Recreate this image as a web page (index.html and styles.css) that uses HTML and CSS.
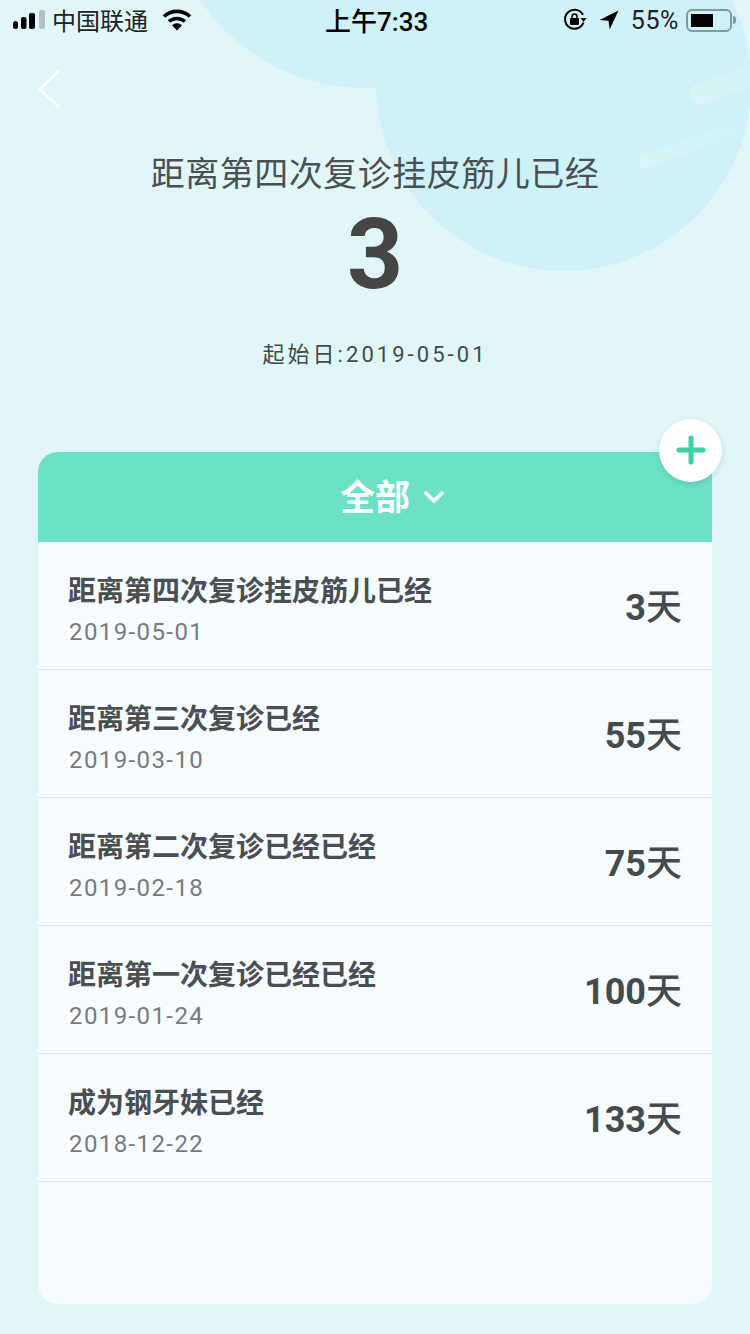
FILE: index.html
```html
<!DOCTYPE html>
<html lang="zh-CN">

<head>
    <meta charset="UTF-8">
    <meta name="viewport" content="width=device-width, initial-scale=1.0">
    <title>倒数日</title>
    <link rel="stylesheet" href="styles.css">
</head>

<body>
    <div class="page">
        <div class="circle circle-1"></div>
        <div class="circle circle-2"></div>
        <div class="streak streak-1"></div>
        <div class="streak streak-2"></div>

        <div class="status">
            <div class="status-left">
                <svg class="signal" width="34" height="20" viewBox="0 0 34 20">
                    <rect x="1" y="11" width="5" height="8" rx="2.500" fill="#000"/>
                    <rect x="9" y="7" width="5.500" height="12" rx="2" fill="#000"/>
                    <rect x="17" y="3" width="6" height="16" rx="2" fill="#000"/>
                    <rect x="27" y="0" width="6" height="19" rx="2" fill="#b2bfc3"/>
                </svg>
                <span class="carrier">中国联通</span>
                <svg class="wifi" width="30" height="22" viewBox="0 0 30 22">
                    <path d="M15 21.500l-5-5.200a7 7 0 0 1 10 0z" fill="#000"/>
                    <path d="M7 12.500a12 12 0 0 1 16 0" fill="none" stroke="#000" stroke-width="3.600"/>
                    <path d="M2 7.500a19 19 0 0 1 26 0" fill="none" stroke="#000" stroke-width="3.600"/>
                </svg>
            </div>
            <div class="status-time">上午7:33</div>
            <div class="status-right">
                <svg width="24" height="24" viewBox="0 0 24 24">
                    <path d="M20.500 14.500A9.500 9.500 0 1 1 20 6.800" fill="none" stroke="#000" stroke-width="2"/>
                    <path d="M17.500 10h6l-3 4z" fill="#000"/>
                    <rect x="7" y="10" width="9" height="7" rx="1" fill="#000"/>
                    <path d="M9 10V8.500a2.500 2.500 0 0 1 5 0V10" fill="none" stroke="#000" stroke-width="1.500"/>
                </svg>
                <svg class="arrow" width="20" height="20" viewBox="0 0 20 20">
                    <path d="M19.500 .5L.5 10l9 .8 1.200 8.700z" fill="#000"/>
                </svg>
                <span class="battery-text">55%</span>
                <div class="battery">
                    <div class="battery-level"></div>
                </div>
                <div class="battery-nub"></div>
            </div>
        </div>

        <div class="back">
            <svg width="24" height="40" viewBox="0 0 24 40">
                <path d="M22 2L3 20l19 18" fill="none" stroke="#fff" stroke-width="2.500"/>
            </svg>
        </div>

        <div class="hero">
            <h1 class="hero-title">距离第四次复诊挂皮筋儿已经</h1>
            <div class="hero-num">3</div>
            <p class="hero-date">起始日:2019-05-01</p>
        </div>

        <div class="card">
            <div class="add-btn">
                <svg width="30" height="30" viewBox="0 0 30 30">
                    <path d="M15 3v24M3 15h24" fill="none" stroke="#3fd0a4" stroke-width="5" stroke-linecap="round"/>
                </svg>
            </div>
            <div class="card-head">
                <span class="card-head-text">全部</span>
                <svg class="card-head-arrow" width="20" height="14" viewBox="0 0 20 14">
                    <path d="M2 3l8 8 8-8" fill="none" stroke="#fff" stroke-width="3.800" stroke-linecap="round" stroke-linejoin="round"/>
                </svg>
            </div>
            <div class="row">
                <div class="row-info">
                    <p class="row-name">距离第四次复诊挂皮筋儿已经</p>
                    <p class="row-date">2019-05-01</p>
                </div>
                <div class="row-days">3<span class="row-unit">天</span></div>
            </div>
            <div class="row">
                <div class="row-info">
                    <p class="row-name">距离第三次复诊已经</p>
                    <p class="row-date">2019-03-10</p>
                </div>
                <div class="row-days">55<span class="row-unit">天</span></div>
            </div>
            <div class="row">
                <div class="row-info">
                    <p class="row-name">距离第二次复诊已经已经</p>
                    <p class="row-date">2019-02-18</p>
                </div>
                <div class="row-days">75<span class="row-unit">天</span></div>
            </div>
            <div class="row">
                <div class="row-info">
                    <p class="row-name">距离第一次复诊已经已经</p>
                    <p class="row-date">2019-01-24</p>
                </div>
                <div class="row-days">100<span class="row-unit">天</span></div>
            </div>
            <div class="row">
                <div class="row-info">
                    <p class="row-name">成为钢牙妹已经</p>
                    <p class="row-date">2018-12-22</p>
                </div>
                <div class="row-days">133<span class="row-unit">天</span></div>
            </div>
        </div>
    </div>
</body>

</html>
```
FILE: styles.css
```css
* {
    margin: 0;
    padding: 0;
    box-sizing: border-box;
}

body {
    font-family: Roboto, 'Noto Sans CJK SC', sans-serif;
    background: #e0f6f9;
    color: #454a4d;
}

.page {
    position: relative;
    width: 750px;
    height: 1334px;
    overflow: hidden;
    background: #e0f6f9;
}

/* background decoration */
.circle {
    position: absolute;
    border-radius: 50%;
    background: #cff2f8;
}

.circle-1 {
    left: 166px;
    top: -310px;
    width: 398px;
    height: 398px;
}

.circle-2 {
    left: 376px;
    top: -104px;
    width: 375px;
    height: 375px;
}

.streak {
    position: absolute;
    border-radius: 10px;
    transform: rotate(-20deg);
}

.streak-1 {
    left: 688px;
    top: 74px;
    width: 80px;
    height: 20px;
    background: linear-gradient(to right, #dbf5f9, #d2f3f8);
}

.streak-2 {
    left: 636px;
    top: 138px;
    width: 110px;
    height: 14px;
    background: linear-gradient(to right, #dbf5f9, #cff2f8);
}

.status {
    position: relative;
    display: grid;
    grid-template-columns: 313px auto 1fr;
    align-items: center;
    height: 40px;
    padding: 0 14px 0 12px;
    color: #000;
}

.status-left {
    display: flex;
    align-items: center;
}

.carrier {
    margin: 0 0 2px 6px;
    font-size: 24px;
    color: #222;
}

.wifi {
    margin-left: 14px;
}

.status-time {
    margin-bottom: 2px;
    font-size: 26px;
    font-weight: 500;
}

.status-right {
    display: flex;
    align-items: center;
    justify-content: flex-end;
}

.arrow {
    margin-left: 12px;
}

.battery-text {
    margin-left: 12px;
    font-size: 25px;
    letter-spacing: 0.6px;
    color: #222;
}

.battery {
    width: 46px;
    height: 23px;
    margin-left: 7px;
    padding: 3px;
    border: 2px solid #7d9ba3;
    border-radius: 6px;
}

.battery-level {
    width: 22px;
    height: 100%;
    background: #000;
}

.battery-nub {
    width: 3px;
    height: 8px;
    margin-left: 1px;
    border-radius: 0 3px 3px 0;
    background: #7d9ba3;
}

.back {
    position: relative;
    height: 40px;
    margin-top: 29px;
    padding-left: 37px;
}

.hero {
    position: relative;
    text-align: center;
}

.hero-title {
    margin-top: 44px;
    font-size: 34px;
    font-weight: 400;
    line-height: 42px;
    letter-spacing: 0.5px;
    color: #4b5053;
}

.hero-num {
    margin-top: 10px;
    font-size: 98px;
    font-weight: bold;
    line-height: 100px;
    color: #454545;
}

.hero-date {
    margin-top: 35px;
    font-size: 22px;
    line-height: 30px;
    letter-spacing: 3.05px;
}

.card {
    position: relative;
    height: 852px;
    margin: 82px 38px 0;
    border-radius: 20px;
    background: #f6fcff;
}

.card-head {
    display: flex;
    align-items: center;
    justify-content: center;
    gap: 14px;
    height: 90px;
    padding: 0 0 6px 34px;
    border-radius: 20px 20px 0 0;
    background: #6be1c7;
    color: #fff;
}

.card-head-text {
    font-size: 35px;
    font-weight: bold;
}

.card-head-arrow {
    margin-top: 5px;
}

.add-btn {
    position: absolute;
    top: -33px;
    right: -10px;
    display: flex;
    align-items: center;
    justify-content: center;
    width: 63px;
    height: 63px;
    padding-bottom: 1px;
    border-radius: 50%;
    background: #fff;
    box-shadow: 0 2px 6px rgba(0, 0, 0, 0.12);
}

.row {
    display: flex;
    align-items: center;
    justify-content: space-between;
    height: 128px;
    padding: 0 30px;
    border-bottom: 1px solid #dfe5e7;
}

.row-info {
    padding-top: 9px;
}

.row-name {
    font-size: 28px;
    font-weight: bold;
    line-height: 36px;
    color: #4a4f52;
}

.row-date {
    margin: 7px 0 0 1px;
    font-size: 24px;
    line-height: 30px;
    color: #767b7e;
    letter-spacing: 1.4px;
}

.row-days {
    margin-bottom: 4px;
    font-size: 36px;
    font-weight: bold;
}

.row-unit {
    font-weight: 500;
}
```
